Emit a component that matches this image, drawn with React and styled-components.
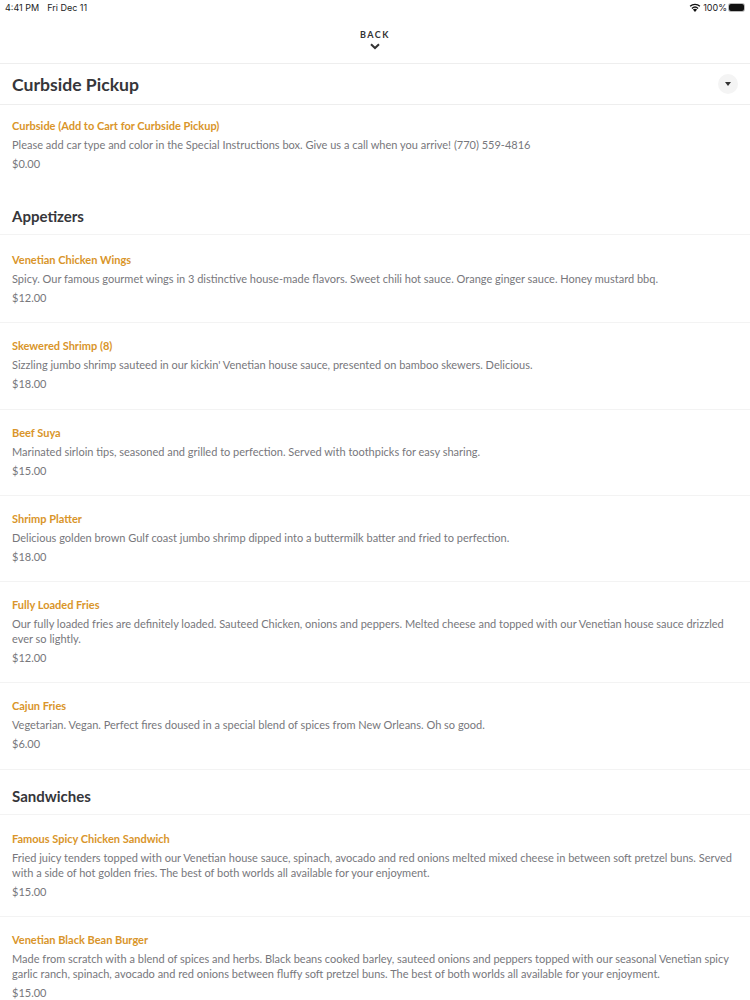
import React from "react"
import styled, { createGlobalStyle } from "styled-components"

const GlobalStyle = createGlobalStyle`
  html, body {
    margin: 0;
    padding: 0;
    background: #fff;
    font-family: Lato, "Open Sans", sans-serif;
  }
  body { height: 1000px; overflow: hidden; }
`

const Page = styled.div`
  width: 750px;
  height: 1000px;
  overflow: hidden;
  background: #fff;
`

const StatusBar = styled.div`
  height: 15px;
  padding: 0 6px 0 5px;
  display: flex;
  justify-content: space-between;
  align-items: center;
  font-family: Inter, "Liberation Sans", sans-serif;
  font-size: 9px;
  color: #1c1c1e;
`

const StatusGroup = styled.div`
  display: flex;
  align-items: center;
  gap: ${props => props.gap}px;
`

const Battery = styled.span`
  width: 15px;
  height: 7px;
  background: #111;
  border-radius: 2px;
  box-shadow: 0 0 0 1px #bbb;
`

const BackBar = styled.div`
  height: 49px;
  border-bottom: 1px solid #eeeeee;
  display: flex;
  flex-direction: column;
  align-items: center;
  padding-top: 14px;
  box-sizing: border-box;
  color: #333;
`

const BackLabel = styled.div`
  font-size: 9px;
  font-weight: 700;
  letter-spacing: 1.5px;
  line-height: 12px;
  margin-bottom: 2px;
`

const TopHeader = styled.div`
  height: 41px;
  box-sizing: border-box;
  padding: 0 12px;
  border-bottom: 1px solid #eeeeee;
  display: flex;
  justify-content: space-between;
  align-items: center;
`

const TopTitle = styled.h1`
  margin: 0;
  font-size: 17.6px;
  font-weight: 700;
  color: #36363a;
`

const Toggle = styled.div`
  width: 20px;
  height: 20px;
  border-radius: 50%;
  background: #f4f4f4;
  display: flex;
  align-items: center;
  justify-content: center;
`

const SectionHeader = styled.div`
  height: 47px;
  box-sizing: border-box;
  padding: 19px 12px 9px;
  margin-top: ${props => props.$top}px;
  margin-bottom: ${props => props.$bottom}px;
  border-bottom: 1px solid #f3f3f3;
  display: flex;
  align-items: center;
`

const SectionTitle = styled.h2`
  margin: 0;
  font-size: 15px;
  line-height: 18px;
  font-weight: 700;
  color: #36363a;
`

const Item = styled.div`
  padding: ${props => (props.$plain ? "13px 12px 17px" : "15px 12px 17.3px")};
  border-bottom: 1px solid ${props => (props.$plain ? "transparent" : "#f3f3f3")};
  font-size: 11px;
  line-height: 15px;
  display: flex;
  flex-direction: column;
  gap: 4px;
`

const ItemName = styled.div`
  font-weight: 700;
  color: #d9952a;
`

const ItemDesc = styled.div`
  color: #77777c;
`

const ItemPrice = styled.div`
  color: #77777c;
`

const menu = [
  {
    plain: true,
    items: [
      {
        name: "Curbside (Add to Cart for Curbside Pickup)",
        desc: "Please add car type and color in the Special Instructions box. Give us a call when you arrive! (770) 559-4816",
        price: "$0.00",
      },
    ],
  },
  {
    title: "Appetizers",
    top: -1,
    bottom: 2,
    items: [
      {
        name: "Venetian Chicken Wings",
        desc: "Spicy. Our famous gourmet wings in 3 distinctive house-made flavors. Sweet chili hot sauce. Orange ginger sauce. Honey mustard bbq.",
        price: "$12.00",
      },
      {
        name: "Skewered Shrimp (8)",
        desc: "Sizzling jumbo shrimp sauteed in our kickin' Venetian house sauce, presented on bamboo skewers. Delicious.",
        price: "$18.00",
      },
      {
        name: "Beef Suya",
        desc: "Marinated sirloin tips, seasoned and grilled to perfection. Served with toothpicks for easy sharing.",
        price: "$15.00",
      },
      {
        name: "Shrimp Platter",
        desc: "Delicious golden brown Gulf coast jumbo shrimp dipped into a buttermilk batter and fried to perfection.",
        price: "$18.00",
      },
      {
        name: "Fully Loaded Fries",
        desc: "Our fully loaded fries are definitely loaded. Sauteed Chicken, onions and peppers. Melted cheese and topped with our Venetian house sauce drizzled ever so lightly.",
        price: "$12.00",
      },
      {
        name: "Cajun Fries",
        desc: "Vegetarian. Vegan. Perfect fires doused in a special blend of spices from New Orleans. Oh so good.",
        price: "$6.00",
      },
    ],
  },
  {
    title: "Sandwiches",
    top: -2,
    bottom: 1,
    items: [
      {
        name: "Famous Spicy Chicken Sandwich",
        desc: "Fried juicy tenders topped with our Venetian house sauce, spinach, avocado and red onions melted mixed cheese in between soft pretzel buns. Served with a side of hot golden fries. The best of both worlds all available for your enjoyment.",
        price: "$15.00",
      },
      {
        name: "Venetian Black Bean Burger",
        desc: "Made from scratch with a blend of spices and herbs. Black beans cooked barley, sauteed onions and peppers topped with our seasonal Venetian spicy garlic ranch, spinach, avocado and red onions between fluffy soft pretzel buns. The best of both worlds all available for your enjoyment.",
        price: "$15.00",
      },
    ],
  },
]

const WifiIcon = () => (
  <svg width="12" height="9" viewBox="0 0 12 9">
    <path d="M6 9 3.9 6.6a3.2 3.2 0 0 1 4.2 0z" fill="#111" />
    <path d="M2.9 5.4a4.7 4.7 0 0 1 6.2 0M1.1 3.3a7.2 7.2 0 0 1 9.8 0" fill="none" stroke="#111" strokeWidth="1.3" />
  </svg>
)

const App = () => (
  <Page>
    <GlobalStyle />
    <StatusBar>
      <StatusGroup gap={8}>
        <span>4:41 PM</span>
        <span>Fri Dec 11</span>
      </StatusGroup>
      <StatusGroup gap={2}>
        <WifiIcon />
        <span>100%</span>
        <Battery />
      </StatusGroup>
    </StatusBar>
    <BackBar>
      <BackLabel>BACK</BackLabel>
      <svg width="10" height="7" viewBox="0 0 10 7">
        <path d="M1 1.2 5 5l4-3.8" fill="none" stroke="#333" strokeWidth="2" />
      </svg>
    </BackBar>
    <TopHeader>
      <TopTitle>Curbside Pickup</TopTitle>
      <Toggle>
        <svg width="6" height="4" viewBox="0 0 6 4">
          <path d="M0 0h6L3 4z" fill="#333" />
        </svg>
      </Toggle>
    </TopHeader>
    {menu.map(section => (
      <section key={section.title || "pickup"}>
        {section.title && (
          <SectionHeader $top={section.top} $bottom={section.bottom}>
            <SectionTitle>{section.title}</SectionTitle>
          </SectionHeader>
        )}
        {section.items.map(item => (
          <Item key={item.name} $plain={section.plain}>
            <ItemName>{item.name}</ItemName>
            <ItemDesc>{item.desc}</ItemDesc>
            <ItemPrice>{item.price}</ItemPrice>
          </Item>
        ))}
      </section>
    ))}
  </Page>
)

export default App
